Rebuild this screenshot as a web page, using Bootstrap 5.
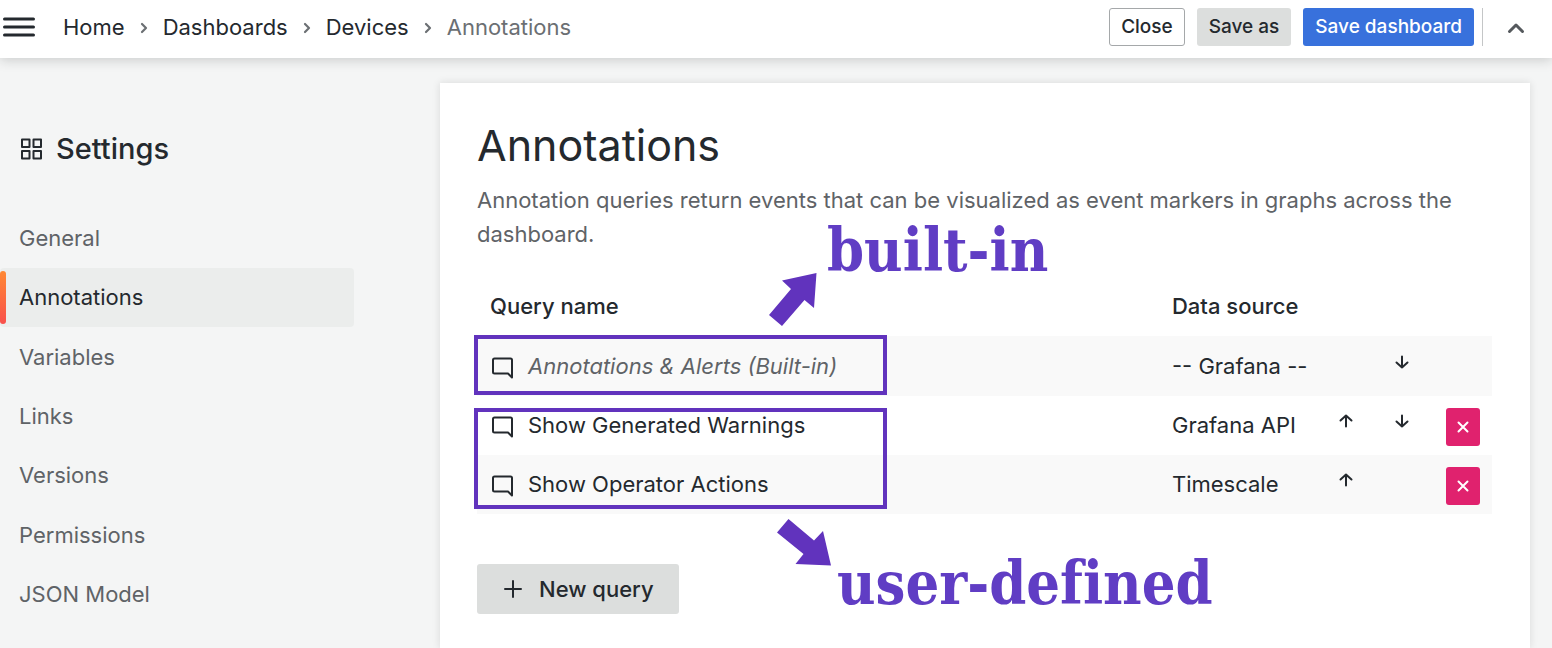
<!DOCTYPE html>
<html lang="en">
<head>
<meta charset="utf-8">
<meta name="viewport" content="width=device-width, initial-scale=1">
<title>Annotations - Settings</title>
<link href="https://cdn.jsdelivr.net/npm/bootstrap@5.3.0/dist/css/bootstrap.min.css" rel="stylesheet">
<style>
  :root { --ink: #24292e; --muted-ink: #5f6367; --note: #6133bd; }
  body { font-family: Inter, "Liberation Sans", sans-serif; font-size: 22px; line-height: 34px; color: var(--ink); background: #f4f5f5; }
  svg { display: block; flex: none; }
  .topbar { height: 58px; background: #fff; padding: 0 27px 4px 3px; box-shadow: 0 1px 12px rgba(24, 26, 27, .22); z-index: 2; }
  .icon-btn { background: none; border: 0; padding: 0; color: var(--ink); }
  .crumbs { gap: 11px; margin: 0 0 0 28px; }
  .crumbs a { color: var(--ink); text-decoration: none; }
  .crumbs .active, .crumbs svg { color: #6b6f73; }
  .bar-actions { gap: 12px; }
  .bar-btn { font-size: 19px; font-weight: 500; line-height: 24px; padding: 6px 11px; border-radius: 3px; color: var(--ink); }
  .btn-outline { background: #fff; border-color: #a5a8aa; }
  .btn-gray, .btn-gray:hover { background: #dcdedd; color: var(--ink); }
  .btn-blue { background: #3871dc; color: #fff; }
  .bar-rule { width: 1px; height: 38px; background: #c4c6c7; }
  .side { width: 440px; padding-top: 69px; }
  .side-title { font-size: 29px; font-weight: 500; line-height: 44px; gap: 13px; padding-left: 20px; margin-bottom: 38px; }
  .side-nav { margin-right: 86px; }
  .side-nav a { color: var(--muted-ink); padding: 12px 19px 13px; border-radius: 4px; }
  .side-nav a:nth-child(3n) { margin-top: 1px; }
  .side-nav a.active { color: var(--ink); background: #ebedec; position: relative; }
  .side-nav a.active::before { content: ""; position: absolute; left: 0; top: 3px; bottom: 3px; width: 6px; border-radius: 3px; background: linear-gradient(#ff8833, #f9504c); }
  .panel { background: #fff; margin: 25px 22px 0 0; padding: 35px 38px 34px 37px; box-shadow: 0 0 8px rgba(24, 26, 27, .12); min-width: 0; }
  .panel h1 { font-size: 43px; font-weight: 400; line-height: 54px; margin-bottom: 11px; }
  .intro { color: var(--muted-ink); margin-bottom: 26px; }
  .query-table { table-layout: fixed; width: 100%; }
  .query-table th { font-weight: 500; height: 59px; padding: 0 13px 2px; }
  .query-table td { height: 59px; padding: 0 13px 1px; }
  .query-table tbody tr:first-child td { height: 60px; }
  .query-table tbody tr:nth-child(odd) { background: #f9f9f9; }
  .query-table .query-source { white-space: nowrap; }
  .query-table em { color: var(--muted-ink); }
  .query-icon { margin: 4px 14px 0 2px; }
  .query-table .move { padding: 0; }
  .query-table .move .icon-btn { margin: 0 auto 9px; display: block; }
  .query-table .remove { padding: 3px 12px 0 0; }
  .col-source { width: 159px; } .col-move { width: 56px; } .col-remove { width: 62px; }
  .btn-remove { width: 34px; height: 38px; padding: 0; border: 0; border-radius: 3px; background: #e0226e; color: #fff; }
  .btn-new { font-size: 22px; line-height: 34px; font-weight: 500; border-radius: 3px; border: 0; padding: 8px 25px 8px 24px; gap: 14px; margin-top: 50px; }
  .frame, .arrow-mark, .note-label { position: absolute; pointer-events: none; }
  .frame { left: -3px; width: 413px; border: 4px solid var(--note); }
  .frame-one { top: 58px; height: 60px; }
  .frame-two { top: 131px; height: 101px; }
  .arrow-mark { color: var(--note); }
  .arrow-up { left: 291px; top: -5px; }
  .arrow-down { left: 300px; top: 241px; }
  .note-label { font-family: "DejaVu Serif Condensed", "DejaVu Serif", serif; font-size: 59px; font-weight: 700; font-variant-ligatures: none; line-height: 60px; color: #603dc4; white-space: nowrap; }
  .label-one { left: 350px; top: -56px; }
  .label-two { left: 360px; top: 277px; }
</style>
</head>
<body class="d-flex flex-column min-vh-100">
<header class="topbar d-flex align-items-center">
  <button class="icon-btn" aria-label="Menu"><svg width="32" height="22" viewBox="0 0 32 22" stroke="currentColor" stroke-width="3" stroke-linecap="round"><path d="M1.5 3h29M1.5 11h29M1.5 19h29"/></svg></button>
  <nav class="crumbs d-flex align-items-center flex-grow-1" aria-label="Breadcrumb">
    <a href="#">Home</a>
    <svg width="16" height="16" viewBox="0 0 16 16" fill="none" stroke="currentColor" stroke-width="2.2" stroke-linecap="round" stroke-linejoin="round"><path d="M6 5l4 4-4 4"/></svg>
    <a href="#">Dashboards</a>
    <svg width="16" height="16" viewBox="0 0 16 16" fill="none" stroke="currentColor" stroke-width="2.2" stroke-linecap="round" stroke-linejoin="round"><path d="M6 5l4 4-4 4"/></svg>
    <a href="#">Devices</a>
    <svg width="16" height="16" viewBox="0 0 16 16" fill="none" stroke="currentColor" stroke-width="2.2" stroke-linecap="round" stroke-linejoin="round"><path d="M6 5l4 4-4 4"/></svg>
    <span class="active" aria-current="page">Annotations</span>
  </nav>
  <div class="d-flex align-items-center">
    <div class="bar-actions d-flex">
      <button class="btn bar-btn btn-outline">Close</button>
      <button class="btn bar-btn btn-gray">Save as</button>
      <button class="btn bar-btn btn-blue">Save dashboard</button>
    </div>
    <span class="bar-rule mx-2"></span>
    <button class="icon-btn ms-3" aria-label="Collapse"><svg width="18" height="18" viewBox="0 0 18 18" fill="none" stroke="#55595d" stroke-width="3" stroke-linecap="round" stroke-linejoin="round"><path d="M2.500 13.500l6.500-6.500 6.500 6.500"/></svg></button>
  </div>
</header>
<div class="d-flex flex-grow-1">
  <aside class="side flex-shrink-0">
    <h2 class="side-title d-flex align-items-center"><svg width="23" height="23" viewBox="0 0 23 23" fill="none" stroke="currentColor" stroke-width="2" stroke-linejoin="round"><path d="M2 1.500h7.500V9H2zM13.500 1.500H21V9h-7.500zM2 13h7.500v7.500H2zM13.500 13H21v7.500h-7.500z"/></svg>Settings</h2>
    <nav class="side-nav nav flex-column" aria-label="Settings">
      <a class="nav-link" href="#">General</a>
      <a class="nav-link active" href="#" aria-current="page">Annotations</a>
      <a class="nav-link" href="#">Variables</a>
      <a class="nav-link" href="#">Links</a>
      <a class="nav-link" href="#">Versions</a>
      <a class="nav-link" href="#">Permissions</a>
      <a class="nav-link" href="#">JSON Model</a>
    </nav>
  </aside>
  <main class="panel flex-grow-1">
    <h1>Annotations</h1>
    <p class="intro">Annotation queries return events that can be visualized as event markers in graphs across the dashboard.</p>
    <div class="position-relative">
      <table class="query-table">
        <colgroup><col><col class="col-source"><col class="col-move"><col class="col-move"><col class="col-remove"></colgroup>
        <thead><tr><th>Query name</th><th colspan="4">Data source</th></tr></thead>
        <tbody>
          <tr>
            <td><div class="d-flex align-items-center"><svg class="query-icon" width="22" height="22" viewBox="0 0 22 22" fill="none" stroke="currentColor" stroke-width="2" stroke-linejoin="round"><path d="M2.500 1.500h16q1.500 0 1.500 1.500v17.500l-4-4H2.500q-1.500 0-1.500-1.500V3q0-1.500 1.500-1.500z"/></svg><em>Annotations &amp; Alerts (Built-in)</em></div></td>
            <td class="query-source">-- Grafana --</td><td class="move"></td>
            <td class="move"><button class="icon-btn" aria-label="Move down"><svg width="14" height="14" viewBox="0 0 14 14" fill="none" stroke="currentColor" stroke-width="2" stroke-linecap="round" stroke-linejoin="round"><path d="M7 1.500v11M1.500 7.500L7 12.500l5.500-5"/></svg></button></td>
            <td></td>
          </tr>
          <tr>
            <td><div class="d-flex align-items-center"><svg class="query-icon" width="22" height="22" viewBox="0 0 22 22" fill="none" stroke="currentColor" stroke-width="2" stroke-linejoin="round"><path d="M2.500 1.500h16q1.500 0 1.500 1.500v17.500l-4-4H2.500q-1.500 0-1.500-1.500V3q0-1.500 1.500-1.500z"/></svg>Show Generated Warnings</div></td>
            <td class="query-source">Grafana API</td>
            <td class="move"><button class="icon-btn" aria-label="Move up"><svg width="14" height="14" viewBox="0 0 14 14" fill="none" stroke="currentColor" stroke-width="2" stroke-linecap="round" stroke-linejoin="round"><path d="M7 12.500v-11M1.500 6.500L7 1.500l5.500 5"/></svg></button></td>
            <td class="move"><button class="icon-btn" aria-label="Move down"><svg width="14" height="14" viewBox="0 0 14 14" fill="none" stroke="currentColor" stroke-width="2" stroke-linecap="round" stroke-linejoin="round"><path d="M7 1.500v11M1.500 7.500L7 12.500l5.500-5"/></svg></button></td>
            <td class="remove"><button class="btn-remove d-flex align-items-center justify-content-center ms-auto" aria-label="Delete"><svg width="12" height="12" viewBox="0 0 12 12" stroke="currentColor" stroke-width="2" stroke-linecap="round"><path d="M1.500 1.500l9 9M10.500 1.500l-9 9"/></svg></button></td>
          </tr>
          <tr>
            <td><div class="d-flex align-items-center"><svg class="query-icon" width="22" height="22" viewBox="0 0 22 22" fill="none" stroke="currentColor" stroke-width="2" stroke-linejoin="round"><path d="M2.500 1.500h16q1.500 0 1.500 1.500v17.500l-4-4H2.500q-1.500 0-1.500-1.500V3q0-1.500 1.500-1.500z"/></svg>Show Operator Actions</div></td>
            <td class="query-source">Timescale</td>
            <td class="move"><button class="icon-btn" aria-label="Move up"><svg width="14" height="14" viewBox="0 0 14 14" fill="none" stroke="currentColor" stroke-width="2" stroke-linecap="round" stroke-linejoin="round"><path d="M7 12.500v-11M1.500 6.500L7 1.500l5.500 5"/></svg></button></td>
            <td class="move"></td>
            <td class="remove"><button class="btn-remove d-flex align-items-center justify-content-center ms-auto" aria-label="Delete"><svg width="12" height="12" viewBox="0 0 12 12" stroke="currentColor" stroke-width="2" stroke-linecap="round"><path d="M1.500 1.500l9 9M10.500 1.500l-9 9"/></svg></button></td>
          </tr>
        </tbody>
      </table>
      <div class="frame frame-one"></div>
      <div class="frame frame-two"></div>
      <svg class="arrow-mark arrow-up" width="50" height="56" viewBox="0 0 50 56" fill="currentColor"><path d="M48.500 1L46 36l-9.500-8L14 54 1 43l22-26-9-8.500z"/></svg>
      <svg class="arrow-mark arrow-down" width="56" height="50" viewBox="0 0 56 50" fill="currentColor"><path d="M11.500 1L37 22.500l9-9.500 8 34.500L18.500 46l8-10L0 14.500z"/></svg>
      <span class="note-label label-one">built-in</span>
      <span class="note-label label-two">user-defined</span>
    </div>
    <button class="btn btn-gray btn-new d-flex align-items-center"><svg width="24" height="24" viewBox="0 0 24 24" stroke="currentColor" stroke-width="2" stroke-linecap="round"><path d="M12 4v16M4 12h16"/></svg>New query</button>
  </main>
</div>
<script src="https://cdn.jsdelivr.net/npm/bootstrap@5.3.0/dist/js/bootstrap.bundle.min.js"></script>
</body>
</html>
